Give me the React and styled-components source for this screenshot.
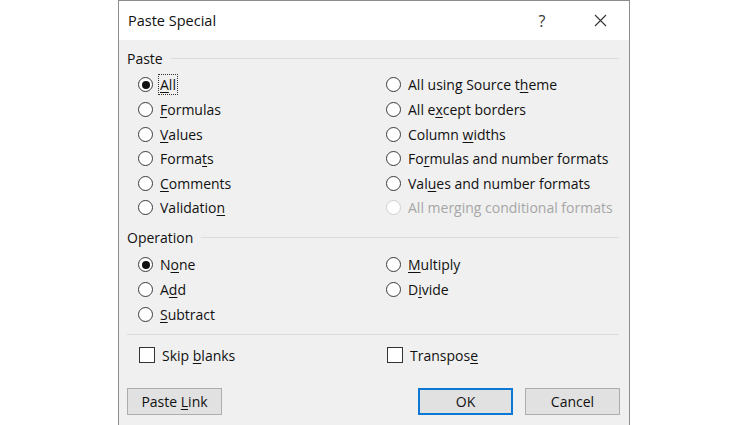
import React from 'react';
import styled, { createGlobalStyle } from 'styled-components';

const Global = createGlobalStyle`
  html, body { margin: 0; padding: 0; background: #fff; }
  body { font-family: "Open Sans", "Noto Sans", sans-serif; color: #111; }
`;

const Dialog = styled.div`
  margin-left: 118px;
  width: 510px;
  height: 440px;
  border: 1px solid #8c8c8c;
  border-bottom: none;
  background: #f0f0f0;
  display: flex;
  flex-direction: column;
`;

const TitleBar = styled.div`
  height: 39px;
  background: #fff;
  display: flex;
  align-items: center;
  padding-left: 9px;
  font-size: 14.5px;
`;

const Title = styled.div`
  flex: 1;
`;

const TitleButton = styled.div`
  width: 58px;
  display: flex;
  justify-content: center;
  align-items: center;
  font-size: 16px;
  color: #333;
`;

const Body = styled.div`
  padding: 8px 9px 0 8px;
  display: flex;
  flex-direction: column;
`;

const GroupHeader = styled.div`
  display: flex;
  align-items: center;
  gap: 8px;
  height: 20px;
  font-size: 14px;
  margin-top: ${p => p.top || 0}px;
  &::after {
    content: "";
    flex: 1;
    height: 1px;
    background: #dcdcdc;
    margin-right: 1px;
  }
`;

const Options = styled.div`
  display: grid;
  grid-template-columns: 248px 1fr;
  grid-auto-flow: column;
  grid-template-rows: repeat(${p => p.rows}, 24.6px);
  padding-left: 11px;
  margin-top: 4.7px;
`;

const Option = styled.label`
  display: flex;
  align-items: center;
  gap: 7px;
  font-size: 14px;
  color: ${p => (p.disabled ? '#a6a6a6' : '#111')};
  white-space: nowrap;
`;

const Radio = styled.span`
  width: 13px;
  height: 13px;
  border-radius: 50%;
  border: 1.5px solid ${p => (p.disabled ? '#d0d0d0' : '#3a3a3a')};
  background: #fff;
  display: flex;
  align-items: center;
  justify-content: center;
  flex-shrink: 0;
  &::after {
    content: "";
    width: 8px;
    height: 8px;
    border-radius: 50%;
    background: ${p => (p.checked ? '#111' : 'transparent')};
  }
`;

const Box = styled.span`
  width: 14px;
  height: 14px;
  border: 1px solid #333;
  background: #fff;
  flex-shrink: 0;
  margin-left: 1px;
`;

const Focus = styled.span`
  outline: 1px dotted #333;
  outline-offset: 0;
  padding: 0 1px;
  margin-left: -1px;
`;

const Separator = styled.div`
  height: 1px;
  background: #dcdcdc;
  margin: 8px 1px 0 0;
`;

const Checks = styled.div`
  display: grid;
  grid-template-columns: 248px 1fr;
  height: 24.6px;
  padding-left: 11px;
  margin-top: 7.5px;
`;

const Buttons = styled.div`
  display: flex;
  margin-top: 20.5px;
  gap: 12px;
`;

const Spacer = styled.div`
  flex: 1;
`;

const Button = styled.div`
  width: ${p => (p.primary ? 91 : 93)}px;
  height: ${p => (p.primary ? 23 : 25)}px;
  border: ${p => (p.primary ? '2px solid #0a78d4' : '1px solid #adadad')};
  background: #e1e1e1;
  display: flex;
  align-items: center;
  justify-content: center;
  font-size: 14px;
`;

const U = styled.u`
  text-underline-offset: 2px;
`;

function Label({ text, k }) {
  if (k === undefined) return text;
  return (
    <span>
      {text.slice(0, k)}
      <U>{text[k]}</U>
      {text.slice(k + 1)}
    </span>
  );
}

const paste = [
  ['All', 0, true],
  ['Formulas', 0],
  ['Values', 0],
  ['Formats', 5],
  ['Comments', 0],
  ['Validation', 9],
  ['All using Source theme', 18],
  ['All except borders', 5],
  ['Column widths', 7],
  ['Formulas and number formats', 2],
  ['Values and number formats', 3],
  ['All merging conditional formats', undefined, false, true],
];

const operation = [
  ['None', 1, true],
  ['Add', 1],
  ['Subtract', 0],
  ['Multiply', 0],
  ['Divide', 1],
  null,
];

function RadioOption({ item }) {
  if (!item) return <span />;
  const [text, k, checked, disabled] = item;
  return (
    <Option disabled={disabled}>
      <Radio checked={checked} disabled={disabled} />
      {text === 'All' ? (
        <Focus>
          <Label text={text} k={k} />
        </Focus>
      ) : (
        <Label text={text} k={k} />
      )}
    </Option>
  );
}

export default function App() {
  return (
    <>
      <Global />
      <Dialog>
        <TitleBar>
          <Title>Paste Special</Title>
          <TitleButton>?</TitleButton>
          <TitleButton>
            <svg width="13" height="13" viewBox="0 0 13 13">
              <path d="M1 1 L12 12 M12 1 L1 12" stroke="#333" strokeWidth="1.1" />
            </svg>
          </TitleButton>
        </TitleBar>
        <Body>
          <GroupHeader>Paste</GroupHeader>
          <Options rows={6}>
            {paste.map((it, i) => (
              <RadioOption key={i} item={it} />
            ))}
          </Options>
          <GroupHeader top={7.7}>Operation</GroupHeader>
          <Options rows={3}>
            {operation.map((it, i) => (
              <RadioOption key={i} item={it} />
            ))}
          </Options>
          <Separator />
          <Checks>
            <Option>
              <Box />
              <Label text="Skip blanks" k={5} />
            </Option>
            <Option>
              <Box />
              <Label text="Transpose" k={8} />
            </Option>
          </Checks>
          <Buttons>
            <Button>
              <Label text="Paste Link" k={6} />
            </Button>
            <Spacer />
            <Button primary>OK</Button>
            <Button>Cancel</Button>
          </Buttons>
        </Body>
      </Dialog>
    </>
  );
}
